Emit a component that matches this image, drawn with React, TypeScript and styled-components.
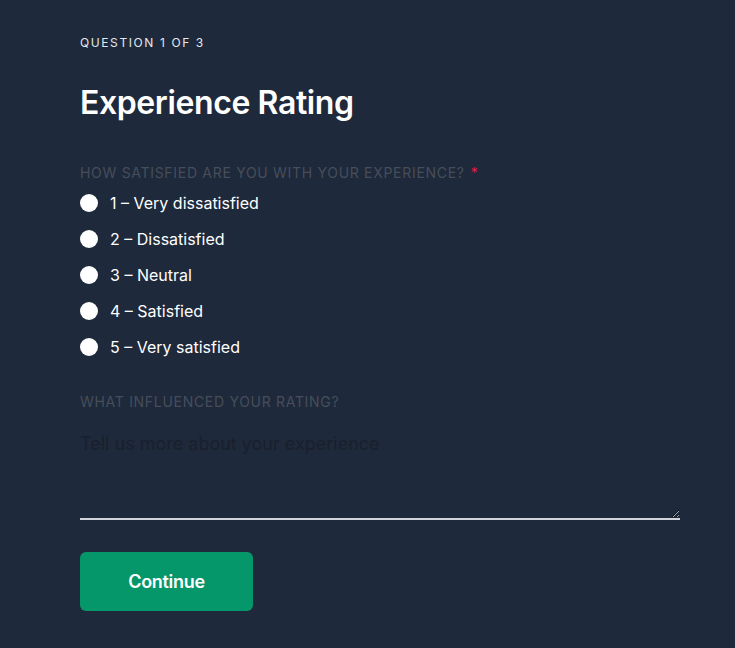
import React, { useState } from 'react';
import styled, { createGlobalStyle } from 'styled-components';

const GlobalStyle = createGlobalStyle`
  html, body {
    margin: 0;
    padding: 0;
    background: #1e293b;
  }
  body {
    font-family: Inter, "Noto Sans", sans-serif;
    color: #ffffff;
    min-height: 100vh;
  }
  * {
    box-sizing: border-box;
  }
`;

const Page = styled.main`
  display: flex;
  flex-direction: column;
  width: 100%;
  min-height: 100vh;
  padding: 33px 55px 32px 80px;
  background: #1e293b;
`;

const Form = styled.form`
  display: flex;
  flex-direction: column;
  width: 600px;
`;

const Eyebrow = styled.div`
  font-size: 12px;
  line-height: 20px;
  font-weight: 400;
  letter-spacing: 1.6px;
  text-transform: uppercase;
  color: #e5e7eb;
`;

const Title = styled.h1`
  margin: 30px 0 0;
  font-size: 32px;
  line-height: 40px;
  font-weight: 600;
  letter-spacing: -0.4px;
  color: #ffffff;
`;

const FieldLabel = styled.label<{ $top: number }>`
  display: block;
  margin-top: ${({ $top }) => `${$top}px`};
  font-size: 14px;
  line-height: 18px;
  font-weight: 400;
  letter-spacing: 0.7px;
  text-transform: uppercase;
  color: #474e5a;
`;

const Required = styled.span`
  color: #e11d48;
  margin-left: 6px;
`;

const OptionList = styled.div`
  display: flex;
  flex-direction: column;
  margin-top: 3px;
`;

const Option = styled.label`
  display: flex;
  align-items: center;
  gap: 12px;
  height: 36px;
  font-size: 16px;
  color: #ffffff;
  cursor: pointer;
`;

const Radio = styled.input`
  appearance: none;
  margin: 0;
  width: 18px;
  height: 18px;
  border-radius: 50%;
  background: #ffffff;
  border: none;
  flex-shrink: 0;

  &:checked {
    box-shadow: inset 0 0 0 5px #059669;
  }
`;

const TextArea = styled.textarea`
  display: block;
  margin-top: 9px;
  width: 600px;
  height: 100px;
  padding: 12px 0;
  border: none;
  border-bottom: 2px solid #d1d5db;
  background: transparent;
  font-family: Inter, "Noto Sans", sans-serif;
  font-size: 18px;
  line-height: 24px;
  color: #ffffff;
  outline: none;
  resize: vertical;

  &::placeholder {
    color: #19202c;
  }
`;

const SubmitButton = styled.button`
  margin-top: 32px;
  align-self: flex-start;
  width: 173px;
  height: 59px;
  border: none;
  border-radius: 6px;
  background: #059669;
  color: #ffffff;
  font-family: Inter, "Noto Sans", sans-serif;
  font-size: 18px;
  font-weight: 600;
  letter-spacing: -0.3px;
  cursor: pointer;
`;

const options = [
  '1 – Very dissatisfied',
  '2 – Dissatisfied',
  '3 – Neutral',
  '4 – Satisfied',
  '5 – Very satisfied',
];

export default function App() {
  const [rating, setRating] = useState<number | null>(null);

  return (
    <>
      <GlobalStyle />
      <Page>
        <Form onSubmit={(e) => e.preventDefault()}>
          <Eyebrow>Question 1 of 3</Eyebrow>
          <Title>Experience Rating</Title>

          <FieldLabel as="div" $top={41}>
            How satisfied are you with your experience?
            <Required>*</Required>
          </FieldLabel>
          <OptionList>
            {options.map((text, i) => (
              <Option key={text}>
                <Radio
                  type="radio"
                  name="rating"
                  checked={rating === i + 1}
                  onChange={() => setRating(i + 1)}
                />
                {text}
              </Option>
            ))}
          </OptionList>

          <FieldLabel htmlFor="influence" $top={28}>
            What influenced your rating?
          </FieldLabel>
          <TextArea id="influence" placeholder="Tell us more about your experience" />

          <SubmitButton type="submit">Continue</SubmitButton>
        </Form>
      </Page>
    </>
  );
}
